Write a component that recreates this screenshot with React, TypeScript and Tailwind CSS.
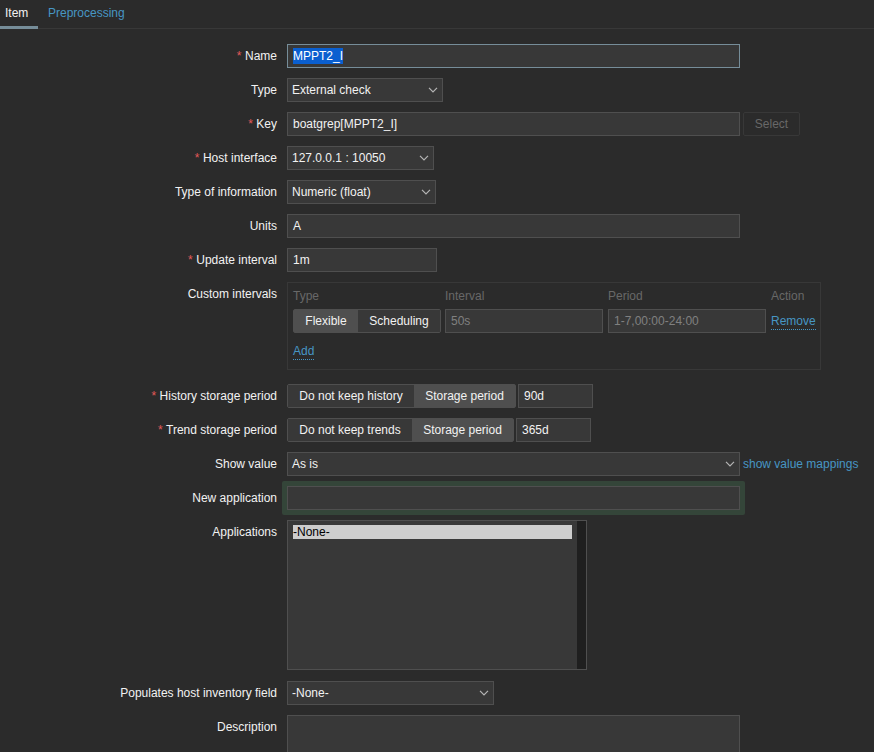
import type { ReactNode } from "react";

const box = "h-6 border border-[#4f4f4f] bg-[#383838]";
const field = `${box} text-[#f2f2f2]`;

function Chevron() {
  return (
    <svg className="h-[6px] w-[10px] shrink-0" viewBox="0 0 10 6" fill="none" stroke="#b5b5b5" strokeWidth={1.2}>
      <path d="M1 0.8 5 4.8 9 0.8" />
    </svg>
  );
}

function Row({
  label,
  required,
  mb = "mb-[10px]",
  children,
}: {
  label: string;
  required?: boolean;
  mb?: string;
  children: ReactNode;
}) {
  return (
    <div className={`flex ${mb}`}>
      <div className="mr-[10px] h-6 w-[277px] shrink-0 text-right leading-[24px] text-[#f2f2f2]">
        {required && <span className="mr-[3.5px] text-[#e45959]">*</span>}
        {label}
      </div>
      <div className="min-w-0 flex-1">{children}</div>
    </div>
  );
}

function Input({ width, value }: { width: string; value?: string }) {
  return <div className={`${field} ${width} px-[5px] leading-[22px]`}>{value}</div>;
}

function Select({ width, value }: { width: string; value: string }) {
  return (
    <div className={`${field} ${width} flex items-center justify-between pl-1 pr-[4px]`}>
      <span>{value}</span>
      <Chevron />
    </div>
  );
}

function Segmented({
  left,
  right,
  leftWidth,
  rightWidth,
  active,
}: {
  left: string;
  right: string;
  leftWidth: string;
  rightWidth: string;
  active: "left" | "right";
}) {
  return (
    <div className="flex h-6 shrink-0 rounded-[2px] border border-[#4f4f4f] text-[#f2f2f2]">
      <div className={`${leftWidth} text-center leading-[22px] ${active === "left" ? "bg-[#4f4f4f]" : "bg-[#383838]"}`}>
        {left}
      </div>
      <div className={`${rightWidth} text-center leading-[22px] ${active === "right" ? "bg-[#4f4f4f]" : "bg-[#383838]"}`}>
        {right}
      </div>
    </div>
  );
}

export default function App() {
  return (
    <div className="h-[752px] overflow-hidden bg-[#2b2b2b] font-['Liberation_Sans',Arial,sans-serif] text-xs">
      {/* Tabs */}
      <div className="flex h-[29px] border-b border-[#383838]">
        <div className="h-[29px] w-[38px] border-b-[3px] border-[#768d99] pl-[5px] pt-[5px] text-[#f2f2f2]">Item</div>
        <div className="ml-[10px] pt-[5px] text-[#4796c4]">Preprocessing</div>
      </div>

      <div className="pt-[15px]">
        <Row label="Name" required>
          <div className="h-6 w-[453px] border border-[#768d99] bg-[#383838] px-[5px] leading-[22px] text-[#f2f2f2]">
            <span className="bg-[#0a5fd0] py-[1px] text-white">MPPT2_I</span>
          </div>
        </Row>
        <Row label="Type">
          <Select width="w-[156px]" value="External check" />
        </Row>
        <Row label="Key" required>
          <div className="flex">
            <Input width="w-[453px]" value="boatgrep[MPPT2_I]" />
            <div className="ml-[3px] h-6 w-[57px] rounded-[2px] border border-[#383838] text-center leading-[22px] text-[#686868]">
              Select
            </div>
          </div>
        </Row>
        <Row label="Host interface" required>
          <Select width="w-[147px]" value="127.0.0.1 : 10050" />
        </Row>
        <Row label="Type of information">
          <Select width="w-[149px]" value="Numeric (float)" />
        </Row>
        <Row label="Units">
          <Input width="w-[453px]" value="A" />
        </Row>
        <Row label="Update interval" required>
          <Input width="w-[150px]" value="1m" />
        </Row>

        <Row label="Custom intervals" mb="mb-[14px]">
          <div className="h-[88px] w-[534px] border border-[#383838] px-[5px]">
            <div className="flex h-[26px] pt-[5px] text-[#686868]">
              <span className="w-[152px]">Type</span>
              <span className="w-[163px]">Interval</span>
              <span className="w-[163px]">Period</span>
              <span>Action</span>
            </div>
            <div className="flex items-center">
              <Segmented left="Flexible" right="Scheduling" leftWidth="w-[64px]" rightWidth="w-[82px]" active="left" />
              <div className={`${box} ml-1 w-[158px] shrink-0 px-[5px] leading-[22px] text-[#808080]`}>50s</div>
              <div className={`${box} ml-[5px] w-[158px] shrink-0 px-[5px] leading-[22px] text-[#808080]`}>1-7,00:00-24:00</div>
              <span className="ml-[5px] shrink-0 border-b border-dotted border-[#4796c4] text-[#4796c4]">Remove</span>
            </div>
            <span className="mt-[10px] inline-block border-b border-dotted border-[#4796c4] text-[#4796c4]">Add</span>
          </div>
        </Row>

        <Row label="History storage period" required>
          <div className="flex">
            <Segmented left="Do not keep history" right="Storage period" leftWidth="w-[126px]" rightWidth="w-[101px]" active="right" />
            <div className="ml-[2px]">
              <Input width="w-[75px]" value="90d" />
            </div>
          </div>
        </Row>
        <Row label="Trend storage period" required>
          <div className="flex">
            <Segmented left="Do not keep trends" right="Storage period" leftWidth="w-[124px]" rightWidth="w-[101px]" active="right" />
            <div className="ml-[2px]">
              <Input width="w-[75px]" value="365d" />
            </div>
          </div>
        </Row>
        <Row label="Show value">
          <div className="flex items-center">
            <Select width="w-[453px]" value="As is" />
            <span className="ml-[3px] text-[#4796c4]">show value mappings</span>
          </div>
        </Row>
        <Row label="New application">
          <div className="relative">
            <div className="absolute -inset-y-[5px] -left-[5px] w-[463px] rounded-[2px] bg-[#344539]" />
            <div className="relative">
              <Input width="w-[453px]" />
            </div>
          </div>
        </Row>
        <Row label="Applications" mb="mb-[11px]">
          <div className="flex h-[150px] w-[300px] border border-[#4f4f4f] bg-[#383838]">
            <div className="flex-1 pl-[5px] pr-[5px] pt-1">
              <div className="h-[14px] bg-[#cdcdcd] leading-[14px] text-black">-None-</div>
            </div>
            <div className="w-[9px] bg-[#1f1f1f]" />
          </div>
        </Row>
        <Row label="Populates host inventory field">
          <Select width="w-[207px]" value="-None-" />
        </Row>
        <Row label="Description">
          <div className={`${box} !h-[60px] w-[453px]`} />
        </Row>
      </div>
    </div>
  );
}
